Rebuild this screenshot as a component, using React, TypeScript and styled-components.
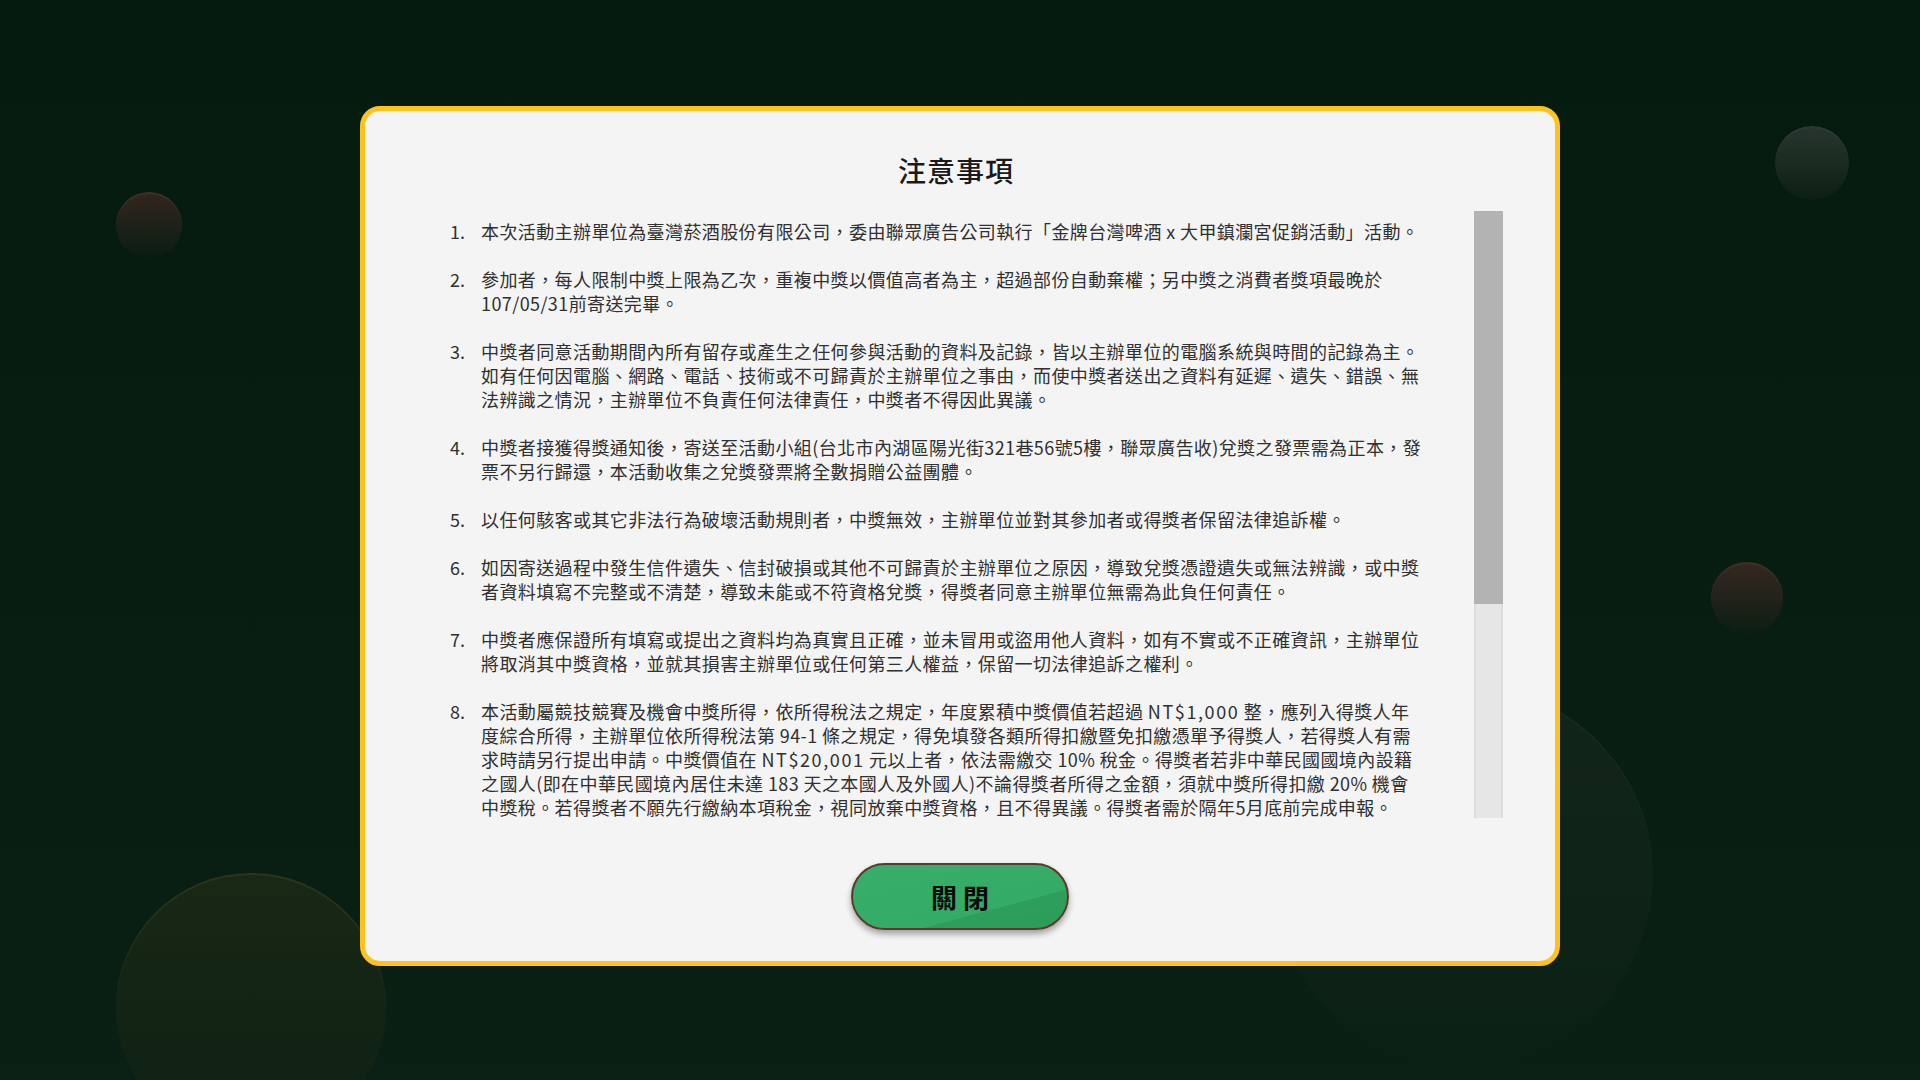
import React from "react";
import styled, { createGlobalStyle } from "styled-components";

const GlobalStyle = createGlobalStyle`
  html, body {
    margin: 0;
    padding: 0;
  }
  body {
    background: #071c10;
    font-family: "Noto Sans CJK TC", "Noto Sans", sans-serif;
  }
`;

const Page = styled.div`
  position: relative;
  width: 1920px;
  height: 1080px;
  overflow: hidden;
  box-sizing: border-box;
  padding-top: 106px;
  display: flex;
  justify-content: center;
  align-items: flex-start;
  background: linear-gradient(180deg, #061b0f 0%, #071d11 45%, #0a2014 100%);
`;

const Bubble = styled.div<{ $x: number; $y: number; $r: number; $top: string; $bottom: string; $rim?: string }>`
  position: absolute;
  left: ${(p) => p.$x - p.$r}px;
  top: ${(p) => p.$y - p.$r}px;
  width: ${(p) => p.$r * 2}px;
  height: ${(p) => p.$r * 2}px;
  border-radius: 50%;
  background: linear-gradient(180deg, ${(p) => p.$top} 0%, ${(p) => p.$bottom} 100%);
  box-shadow: inset 0 2px 1px ${(p) => p.$rim ?? "rgba(255,255,255,0.03)"};
  pointer-events: none;
`;

const Modal = styled.div`
  position: relative;
  z-index: 1;
  width: 1200px;
  height: 860px;
  box-sizing: border-box;
  border: 5px solid #fdc21d;
  border-radius: 20px;
  background: #f4f4f4;
  padding: 39px 0 31px;
  display: flex;
  flex-direction: column;
  align-items: stretch;
`;

const Title = styled.h2`
  margin: 0;
  padding-right: 8px;
  font-size: 28px;
  line-height: 40px;
  font-weight: 500;
  letter-spacing: 1px;
  color: #1a1a1a;
  text-align: center;
`;

const ScrollArea = styled.div`
  height: 607px;
  margin: 21px 52px 0 85px;
  display: flex;
  align-items: stretch;
`;

const Content = styled.div`
  flex: 1;
  min-width: 0;
  overflow: hidden;
`;

const Track = styled.div`
  width: 29px;
  flex: none;
  box-sizing: border-box;
  background: #e6e6e6;
  border-left: 2px solid #dcdcdc;
  border-right: 2px solid #dcdcdc;
  display: flex;
  flex-direction: column;
`;

const Thumb = styled.div<{ $size: number }>`
  height: ${(p) => p.$size}px;
  margin: 0 -2px;
  background: #b3b3b3;
`;

const List = styled.ol`
  list-style: none;
  margin: 0;
  padding: 8px 51px 0 0;
  display: flex;
  flex-direction: column;
  gap: 24px;
  font-size: 18px;
  line-height: 24px;
  letter-spacing: 0.4px;
  color: #303030;
`;

const Item = styled.li`
  display: grid;
  grid-template-columns: 31px 1fr;
`;

const Num = styled.span`
  letter-spacing: 0;
`;

const Text = styled.span``;

const Amount = styled.span`
  letter-spacing: 1.6px;
`;

const Footer = styled.div`
  margin-top: 45px;
  display: flex;
  justify-content: center;
`;

const CloseButton = styled.button`
  width: 218px;
  height: 67px;
  box-sizing: border-box;
  border: 2px solid #5b3a2c;
  border-radius: 34px;
  background: linear-gradient(165deg, #37ae6a 0%, #35ab68 68%, #2d9e5b 68%, #2c9c5a 100%);
  box-shadow: 0 4px 6px rgba(0, 0, 0, 0.35);
  font-family: "Noto Sans CJK TC", "Noto Sans", sans-serif;
  font-size: 26px;
  font-weight: 700;
  color: #0a0a0a;
  line-height: 1;
  cursor: pointer;
  padding: 0;
`;

const items: React.ReactNode[] = [
  "本次活動主辦單位為臺灣菸酒股份有限公司，委由聯眾廣告公司執行「金牌台灣啤酒 x 大甲鎮瀾宮促銷活動」活動。",
  "參加者，每人限制中獎上限為乙次，重複中獎以價值高者為主，超過部份自動棄權；另中獎之消費者獎項最晚於107/05/31前寄送完畢。",
  "中獎者同意活動期間內所有留存或產生之任何參與活動的資料及記錄，皆以主辦單位的電腦系統與時間的記錄為主。如有任何因電腦、網路、電話、技術或不可歸責於主辦單位之事由，而使中獎者送出之資料有延遲、遺失、錯誤、無法辨識之情況，主辦單位不負責任何法律責任，中獎者不得因此異議。",
  "中獎者接獲得獎通知後，寄送至活動小組(台北市內湖區陽光街321巷56號5樓，聯眾廣告收)兌獎之發票需為正本，發票不另行歸還，本活動收集之兌獎發票將全數捐贈公益團體。",
  "以任何駭客或其它非法行為破壞活動規則者，中獎無效，主辦單位並對其參加者或得獎者保留法律追訴權。",
  "如因寄送過程中發生信件遺失、信封破損或其他不可歸責於主辦單位之原因，導致兌獎憑證遺失或無法辨識，或中獎者資料填寫不完整或不清楚，導致未能或不符資格兌獎，得獎者同意主辦單位無需為此負任何責任。",
  "中獎者應保證所有填寫或提出之資料均為真實且正確，並未冒用或盜用他人資料，如有不實或不正確資訊，主辦單位將取消其中獎資格，並就其損害主辦單位或任何第三人權益，保留一切法律追訴之權利。",
  <>
    本活動屬競技競賽及機會中獎所得，依所得稅法之規定，年度累積中獎價值若超過 <Amount>NT$1,000</Amount>{" "}
    整，應列入得獎人年度綜合所得，主辦單位依所得稅法第 94-1
    條之規定，得免填發各類所得扣繳暨免扣繳憑單予得獎人，若得獎人有需求時請另行提出申請。中獎價值在{" "}
    <Amount>NT$20,001</Amount> 元以上者，依法需繳交 10%
    稅金。得獎者若非中華民國國境內設籍之國人(即在中華民國境內居住未達 183 天之本國人及外國人)不論得獎者所得之金額，須就中獎所得扣繳
    20% 機會中獎稅。若得獎者不願先行繳納本項稅金，視同放棄中獎資格，且不得異議。得獎者需於隔年5月底前完成申報。
  </>,
];

export default function App() {
  return (
    <>
      <GlobalStyle />
      <Page>
        <Bubble $x={149} $y={225} $r={33} $top="rgba(62,40,36,0.8)" $bottom="rgba(40,30,26,0.1)" $rim="rgba(140,85,75,0.2)" />
        <Bubble $x={1812} $y={163} $r={37} $top="rgba(62,72,66,0.6)" $bottom="rgba(36,46,40,0.2)" />
        <Bubble $x={1747} $y={598} $r={36} $top="rgba(70,42,38,0.75)" $bottom="rgba(40,30,26,0.15)" $rim="rgba(140,85,75,0.18)" />
        <Bubble $x={251} $y={1008} $r={135} $top="rgba(70,62,28,0.28)" $bottom="rgba(30,36,16,0.1)" $rim="rgba(190,160,80,0.12)" />
        <Bubble $x={1463} $y={875} $r={190} $top="rgba(55,62,45,0.22)" $bottom="rgba(28,38,26,0.08)" />
        <Modal>
          <Title>注意事項</Title>
          <ScrollArea>
            <Content>
              <List>
                {items.map((t, i) => (
                  <Item key={i}>
                    <Num>{i + 1}.</Num>
                    <Text>{t}</Text>
                  </Item>
                ))}
              </List>
            </Content>
            <Track>
              <Thumb $size={393} />
            </Track>
          </ScrollArea>
          <Footer>
            <CloseButton type="button">關 閉</CloseButton>
          </Footer>
        </Modal>
      </Page>
    </>
  );
}
